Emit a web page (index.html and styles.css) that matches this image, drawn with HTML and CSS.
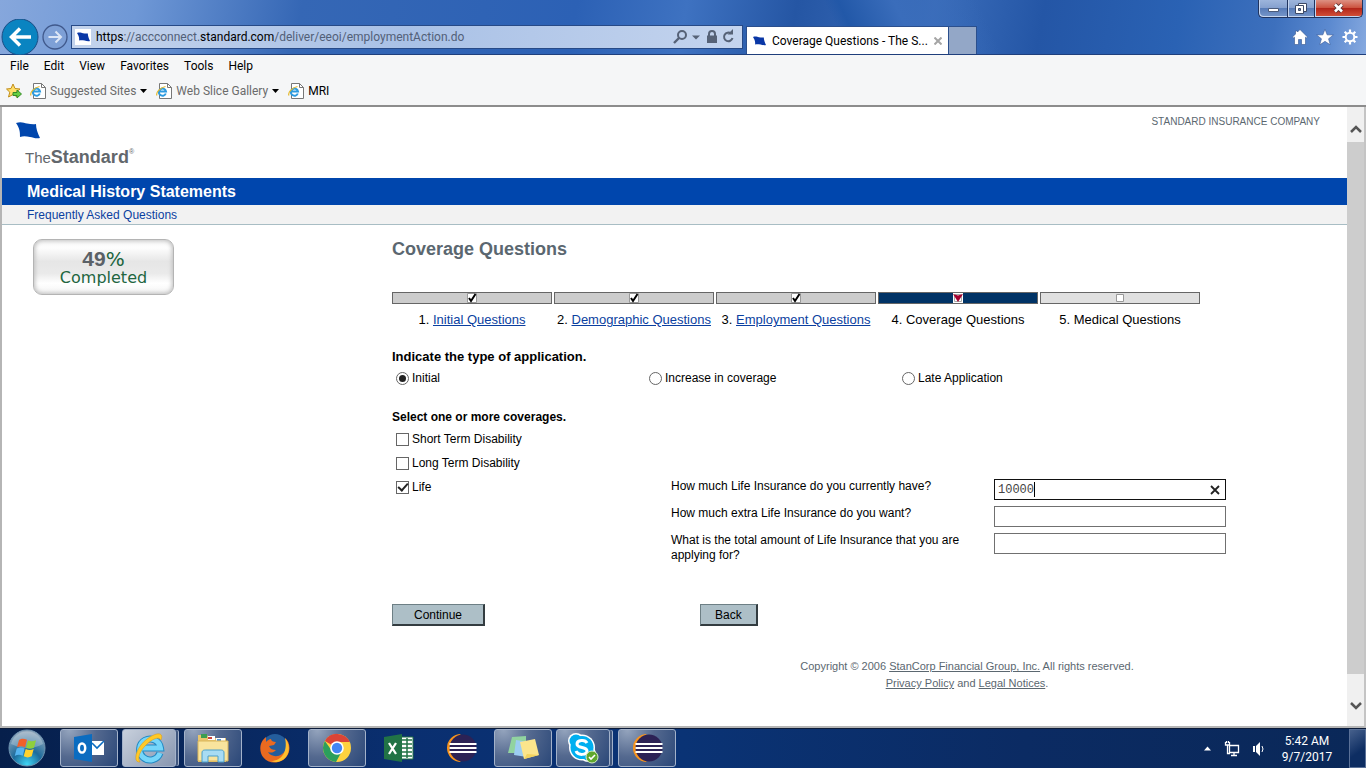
FILE: index.html
```html
<!DOCTYPE html>
<html lang="en">
<head>
<meta charset="utf-8">
<meta name="viewport" content="width=device-width, initial-scale=1">
<title>Coverage Questions - The Standard</title>
<link rel="stylesheet" href="styles.css">
</head>
<body>
<svg class="defs" aria-hidden="true">
  <symbol id="flag" viewBox="0 0 24 17"><path d="M0 1C5-1 8 1 11 1.500s6 1 9 .5c0 4 1.500 9 4 14-4 1-7-.5-10-1-4-.8-7-1-10 0 0-5 0-8-4-14z" fill="currentColor"/></symbol>
  <symbol id="iepage" viewBox="0 0 16 16">
    <path d="M3.500.5h8l4 4v11h-12z" fill="#fff" stroke="#777"/><path d="M11.500.5v4h4" fill="none" stroke="#777"/>
    <path d="M9.800 10.500a3.600 3.600 0 1 1 .2-2H3.500" fill="none" stroke="#2d9be0" stroke-width="2"/>
    <path d="M1 12.500C-.5 10 4 4.500 9.500 3.500" fill="none" stroke="#e5b92c" stroke-width="1.200"/>
  </symbol>
  <symbol id="eclipse" viewBox="0 0 32 30">
    <path d="M16 1A14 14 0 0 0 16 29 17 17 0 0 1 16 1z" fill="#f7941e"/>
    <circle cx="18" cy="15" r="13.500" fill="#2c2255"/>
    <path d="M4.500 11h27M4.500 15h27M4.500 19h27" stroke="#fff" stroke-width="2"/>
  </symbol>
  <symbol id="check" viewBox="0 0 10 10"><path d="M.5.5h9v9h-9z" fill="#fff" stroke="#999"/><path d="M2 5l2 3 4.500-7" fill="none" stroke="#000" stroke-width="2"/></symbol>
</svg>

<header class="chrome">
  <div class="window-controls">
    <button class="win-btn" aria-label="Minimize"><svg width="28" height="17"><path d="M9.500 8.500h10v3h-10z" fill="#fff" stroke="#4b5b7a"/></svg></button>
    <button class="win-btn" aria-label="Restore"><svg width="26" height="17"><path d="M10.500 3.500h8v8h-8z" fill="#fff" stroke="#3c4966"/><path d="M7.500 5.500h8v8h-8z" fill="#fff" stroke="#3c4966"/><path d="M10.500 8.500h2v2h-2z" fill="#6d87b5" stroke="#3c4966"/></svg></button>
    <button class="win-btn win-close" aria-label="Close"><svg width="47" height="17"><path d="M20 4.500l7 7m0-7l-7 7" stroke="#5d3434" stroke-width="4.500"/><path d="M20 4.500l7 7m0-7l-7 7" stroke="#fff" stroke-width="2.600"/></svg></button>
  </div>
  <div class="nav">
    <button class="back" aria-label="Go back"><svg width="38" height="36" viewBox="0 1 38 36"><circle cx="19" cy="19" r="18" fill="#0a84c1" stroke="#1a4d85"/><path d="M30 19H11M19 10.500L10.500 19l8.500 8.500" fill="none" stroke="#fff" stroke-width="3.500"/></svg></button>
    <button class="forward" aria-label="Go forward"><svg width="26" height="26"><circle cx="13" cy="13" r="12" fill="#7f9fd4" fill-opacity=".5" stroke="#40598c" stroke-width="1.300"/><path d="M6.500 13h12M13.500 7.500l5.500 5.500-5.500 5.500" fill="none" stroke="#dce6f6" stroke-width="2"/></svg></button>
    <div class="address">
      <span class="favicon"><svg width="13" height="10"><use href="#flag"/></svg></span>
      <span class="url"><b>https</b>://accconnect.<b>standard.com</b>/deliver/eeoi/employmentAction.do</span>
      <svg class="address-icons" width="64" height="16" fill="none" stroke="#566277">
        <circle cx="9" cy="6" r="4" stroke-width="2"/><path d="M6 9l-5 5" stroke-width="2.400"/>
        <path d="M19 6.500h8l-4 4z" fill="#566277" stroke="none"/>
        <path d="M34 6.500h10v7.500H34z" fill="#566277" stroke="none"/><path d="M36 7V5a3 3 0 0 1 6 0v2" stroke-width="2"/>
        <path d="M58 4.500A4.300 4.300 0 1 0 59.500 9" stroke-width="2"/><path d="M54.500 5.500H60V0z" fill="#566277" stroke="none"/>
      </svg>
    </div>
    <div class="tab"><svg width="13" height="10"><use href="#flag"/></svg><span>Coverage Questions - The S...</span><button class="tab-close" aria-label="Close tab"><svg width="8" height="8"><path d="M.5.5l7 7m0-7l-7 7" stroke="#a5a5a5" stroke-width="2"/></svg></button></div>
    <button class="new-tab" aria-label="New tab"></button>
    <div class="tools">
      <button aria-label="Home"><svg width="16" height="16"><path d="M8 .5L15.500 8l-1 1-1-.8V15.500H9.500v-5h-3v5H2.500V8.200l-1 .8-1-1L3.500 5V2h2v1z" fill="#fff" stroke="#34548d" stroke-width=".6"/></svg></button>
      <button aria-label="Favorites"><svg width="18" height="16" viewBox="0 0 16 15"><path d="M8 .2l2 5.300 5.800.1-4.500 3.600 1.600 5.600L8 11.600l-4.900 3.200 1.600-5.600L.2 5.600 6 5.500z" fill="#fff" stroke="#34548d" stroke-width=".5"/></svg></button>
      <button aria-label="Tools"><svg width="16" height="16" fill="none" stroke="#fff"><circle cx="8" cy="8" r="4.300" stroke-width="2"/><path d="M8 .5v3M8 12.500v3M.5 8h3M12.500 8h3M2.700 2.700l2 2M11.300 11.300l2 2M2.700 13.300l2-2M11.300 4.700l2-2" stroke-width="2.200"/></svg></button>
    </div>
  </div>
</header>

<div class="bars">
  <nav class="menu"><button>File</button><button>Edit</button><button>View</button><button>Favorites</button><button>Tools</button><button>Help</button></nav>
  <nav class="favorites">
    <button aria-label="Add to favorites"><svg width="17" height="16"><path d="M7 1l2 4.500 5 .5-3.800 3.200L11.500 14 7 11.500 2.500 14l1.300-4.800L.5 6l4.500-.5z" fill="#ffdf69" stroke="#c18e1c"/><path d="M7 9.500h4V7l4.500 4-4.500 4v-2.500H7z" fill="#67cf43" stroke="#348b27"/></svg></button>
    <button class="fav fav-wide"><svg width="16" height="16"><use href="#iepage"/></svg><span>Suggested Sites</span><svg width="7" height="4"><path d="M0 0h7L3.500 4z"/></svg></button>
    <button class="fav fav-wide"><svg width="16" height="16"><use href="#iepage"/></svg><span>Web Slice Gallery</span><svg width="7" height="4"><path d="M0 0h7L3.500 4z"/></svg></button>
    <button class="fav fav-dark"><svg width="16" height="16"><use href="#iepage"/></svg><span>MRI</span></button>
  </nav>
</div>

<div class="viewport">
  <div class="page">
    <div class="brand">
      <div class="logo"><svg class="logo-flag" width="24" height="17"><use href="#flag"/></svg><div class="logo-name">The<strong>Standard</strong><sup>®</sup></div></div>
      <div class="company">STANDARD INSURANCE COMPANY</div>
    </div>
    <div class="title-bar">Medical History Statements</div>
    <div class="sub-bar"><a href="#faq">Frequently Asked Questions</a></div>
    <div class="body">
      <aside class="side"><div class="progress"><div class="percent"><b>49</b>%</div><div>Completed</div></div></aside>
      <main class="content">
        <h1>Coverage Questions</h1>
        <ol class="steps">
          <li><div class="step-bar"><svg width="10" height="10"><use href="#check"/></svg></div>1. <a href="#s1">Initial Questions</a></li>
          <li><div class="step-bar"><svg width="10" height="10"><use href="#check"/></svg></div>2. <a href="#s2">Demographic Questions</a></li>
          <li><div class="step-bar"><svg width="10" height="10"><use href="#check"/></svg></div>3. <a href="#s3">Employment Questions</a></li>
          <li><div class="step-bar current"><svg width="10" height="10"><path d="M0 0h10v10H0z" fill="#fff"/><path d="M1.500 1.500h7v7h-7z" fill="none" stroke="#aaa"/><path d="M0 1l5 1.500L10 1 5 9z" fill="#a5002f"/></svg></div>4. Coverage Questions</li>
          <li><div class="step-bar next"><svg width="10" height="10"><path d="M1.500 1.500h7v7h-7z" fill="#fff" stroke="#999"/></svg></div>5. Medical Questions</li>
        </ol>
        <form>
          <h2 class="type-title">Indicate the type of application.</h2>
          <div class="types">
            <label class="choice"><input type="radio" name="type" checked>Initial</label>
            <label class="choice"><input type="radio" name="type">Increase in coverage</label>
            <label class="choice"><input type="radio" name="type">Late Application</label>
          </div>
          <h2 class="cover-title">Select one or more coverages.</h2>
          <label class="choice cover"><input type="checkbox">Short Term Disability</label>
          <label class="choice cover"><input type="checkbox">Long Term Disability</label>
          <div class="life">
            <label class="choice cover"><input type="checkbox" checked>Life</label>
            <div class="amounts">
              <label for="have">How much Life Insurance do you currently have?</label>
              <div class="field"><input id="have" class="active" type="text" value="10000"><span class="caret"></span><button type="button" class="clear" aria-label="Clear"><svg width="10" height="10"><path d="M1 1l8 8m0-8L1 9" stroke="#222" stroke-width="1.800"/></svg></button></div>
              <label for="extra">How much extra Life Insurance do you want?</label>
              <div class="field"><input id="extra" type="text"></div>
              <label for="total">What is the total amount of Life Insurance that you are applying for?</label>
              <div class="field"><input id="total" type="text"></div>
            </div>
          </div>
          <div class="actions"><button type="button" class="action">Continue</button><button type="button" class="action">Back</button></div>
        </form>
        <footer class="legal">Copyright © 2006 <a href="#corp">StanCorp Financial Group, Inc.</a> All rights reserved.<br><a href="#privacy">Privacy Policy</a> and <a href="#legal">Legal Notices</a>.</footer>
      </main>
    </div>
  </div>
  <div class="scrollbar">
    <button aria-label="Scroll up"><svg width="12" height="9"><path d="M1 7l5-5 5 5" fill="none" stroke="#555" stroke-width="2.500"/></svg></button>
    <div class="track"><div class="thumb"></div></div>
    <button aria-label="Scroll down"><svg width="12" height="9"><path d="M1 2l5 5 5-5" fill="none" stroke="#555" stroke-width="2.500"/></svg></button>
  </div>
</div>

<footer class="taskbar">
  <button class="start" aria-label="Start"><svg width="38" height="38" viewBox="0 0 38 38">
    <defs><radialGradient id="orb" cx=".5" cy=".95" r=".9"><stop offset="0" stop-color="#3fd5f5"/><stop offset=".45" stop-color="#1c6b9c"/><stop offset="1" stop-color="#8fa6bb"/></radialGradient></defs>
    <circle cx="19" cy="19" r="18" fill="url(#orb)" stroke="#6f93b0"/><path d="M3 15a16.500 16.500 0 0 1 32 0c-9 5-20 6-32 0z" fill="#fff" opacity=".25"/>
    <path d="M11 11c3-2 5-1.500 8-.2l-2 7.500c-3-1.500-5-1.500-8 0z" fill="#f0602a"/><path d="M20 11.500c3 1.200 5 1 8-.3l-2 7.500c-3 1.300-5 1.300-8 0z" fill="#8fcf3c"/>
    <path d="M8.700 19.500c3-1.500 5-1.300 8 0l-2 7.300c-3-1.300-5-1.300-8 .3z" fill="#55b4f0"/><path d="M17.700 20c3 1.300 5 1.300 8 0l-2 7.300c-3 1.500-5 1.500-8 0z" fill="#ffd22e"/></svg></button>
  <button class="task open" aria-label="Outlook"><svg width="32" height="30" viewBox="0 0 32 30"><path d="M1 4l18-3v28L1 26z" fill="#0b6cc0"/><ellipse cx="9" cy="15" rx="3.200" ry="4.600" fill="none" stroke="#fff" stroke-width="2.500"/><path d="M19 8h12v14H19z" fill="#fff"/><path d="M19 10l5 5 7-7" fill="none" stroke="#0b6cc0" stroke-width="1.600"/></svg></button>
  <button class="task open stack bright" aria-label="Internet Explorer"><svg width="32" height="32" viewBox="0 0 32 32"><path d="M27 21a10.500 10.500 0 1 1 .5-5H9" fill="none" stroke="#238ac4" stroke-width="7"/><path d="M27 21a10.500 10.500 0 1 1 .5-5H9" fill="none" stroke="#75d6fa" stroke-width="5"/><path d="M7 30C-1 31 3 15 14 7S31 1 28 8C26 4 19 7 13 13S4 26 7 30z" fill="#ffc928" stroke="#d69512" stroke-width=".5"/></svg></button>
  <button class="task open" aria-label="File Explorer"><svg width="34" height="32" viewBox="0 0 34 32"><path d="M2 3h9l2 3h17v24H2z" fill="#e9c66c"/><path d="M5 2h6v4H5z" fill="#3c9e50"/><path d="M12 4h7v4h-7z" fill="#fff"/><path d="M12 5h4v2h-4z" fill="#cc453c"/><path d="M20 6h9v4h-9z" fill="#fff"/><path d="M21 7h4v2h-4z" fill="#5795d0"/><path d="M2 9h30v20H2z" fill="#f9e49d" stroke="#d9b55b"/><path d="M6 30V21c0-3 2-3 4-3h14c2 0 4 0 4 3v9h-6v-6H12v6z" fill="#a8dcf3" stroke="#4a9fca"/></svg></button>
  <button class="task" aria-label="Firefox"><svg width="32" height="32" viewBox="0 0 32 32"><circle cx="16" cy="15" r="13" fill="#245d9c"/><path d="M7 5C0 10 0 20 4 25c6 8 19 7 24-1 4-6 3-14-2-18 3 7 2 13-3 16-5 4-12 2-14-2 3 1 5 1 8-2-3 0-6-1-7-4l5-1 2-3c-3 0-5-1-5-3-2 0-4 2-5 3z" fill="#ea6a20"/><path d="M26 6c5 6 5 14 1 19-4 5-10 6-15 4 11 0 17-10 14-23z" fill="#ffc02e"/></svg></button>
  <button class="task open" aria-label="Chrome"><svg width="30" height="30" viewBox="0 0 30 30"><circle cx="15" cy="15" r="14" fill="#ffd23f"/><path d="M15 15L2.900 8A14 14 0 0 1 27.800 9H15z" fill="#db4437"/><path d="M2.900 8A14 14 0 0 0 14 29l6-11-10 0z" fill="#2b9f5c"/><circle cx="15" cy="15" r="6.800" fill="#fff"/><circle cx="15" cy="15" r="5.200" fill="#4285f4"/></svg></button>
  <button class="task" aria-label="Excel"><svg width="32" height="30" viewBox="0 0 32 30"><path d="M17 4h13v22H17z" fill="#fff" stroke="#217346"/><path d="M19 7h10M19 11h10M19 15h10M19 19h10M19 23h10M24 5v20" stroke="#217346" stroke-width="1.500"/><path d="M1 4l18-3v28L1 26z" fill="#217346"/><path d="M6 10l7 11m0-11L6 21" stroke="#fff" stroke-width="2.300"/></svg></button>
  <button class="task" aria-label="Eclipse"><svg width="32" height="30"><use href="#eclipse"/></svg></button>
  <button class="task open" aria-label="Sticky Notes"><svg width="34" height="30" viewBox="0 0 34 30"><path d="M6 4l14-1v17H2z" fill="#91d3a0"/><path d="M10 7l13 2-2 15-13-2z" fill="#9ccdf1"/><path d="M14 9l15-3 4 16-15 4z" fill="#fbe58c"/><path d="M18 26l3-5 12 1z" fill="#f3d35d"/></svg></button>
  <button class="task open stack" aria-label="Skype"><svg width="34" height="32" viewBox="0 0 34 32"><circle cx="10" cy="9" r="8" fill="#fff"/><circle cx="22" cy="22" r="8" fill="#fff"/><circle cx="16" cy="15.500" r="13" fill="#fff"/><circle cx="10" cy="9" r="6.500" fill="#00aff0"/><circle cx="22" cy="22" r="6.500" fill="#00aff0"/><circle cx="16" cy="15.500" r="11.500" fill="#00aff0"/><path d="M21 11c-2-4-10-3-10 1 0 5 10 2 10 7 0 4-9 5-11 0" fill="none" stroke="#fff" stroke-width="3"/><circle cx="26" cy="25" r="6" fill="#5fa72c" stroke="#d5eec6"/><path d="M23 25l2 2 4-4" fill="none" stroke="#fff" stroke-width="1.600"/></svg></button>
  <button class="task open" aria-label="Eclipse workspace"><svg width="32" height="30"><use href="#eclipse"/></svg></button>
  <div class="tray">
    <svg width="8" height="5"><path d="M0 4.500h7L3.500.5z" fill="#fff"/></svg>
    <svg width="16" height="16" fill="none" stroke="#fff"><path d="M5.500 4.500h9v7h-9zM7 14.500h6M10 12v2M1.500 1v3h4V1M2.500 0v2M4.500 0v2M3.500 4v8.500H6" stroke-width="1.300"/></svg>
    <svg width="15" height="16"><path d="M1 5h2v6H1zM4 5l4-4v14l-4-4z" fill="#fff"/><path d="M10 5q2 3 0 6" fill="none" stroke="#fff"/></svg>
    <div class="clock">5:42 AM<br>9/7/2017</div>
  </div>
  <button class="show-desktop" aria-label="Show desktop"></button>
</footer>
</body>
</html>
```
FILE: styles.css
```css
* { box-sizing: border-box; }
body {
  margin: 0;
  min-height: 100vh;
  display: flex;
  flex-direction: column;
  font: 12px/16px "Liberation Sans", Arial, sans-serif;
  color: #000;
  background: #fff;
}
button { font: inherit; color: inherit; padding: 0; border: 0; background: none; }
svg { display: block; flex: none; }
.defs { position: absolute; width: 0; height: 0; }

/* Browser frame */
.chrome, .bars, .taskbar { font-family: Roboto, "Open Sans", sans-serif; }
.chrome {
  height: 55px;
  border-bottom: 1px solid #1f3f7c;
  background:
    linear-gradient(65deg, transparent 61%, #2258a8 62%, #3a6dbb 66%, transparent 72%),
    linear-gradient(100deg, #86a7dc 0, #6f98d6 10%, #3567b5 22%, #2c61b5 42%, #3e72c1 50%, #2556a4 58%, #3b6dba 68%, #2456a6 76%, #2a62b4 86%, #3d70bd 93%, #5c8ad0 97%, #86a9df 100%);
}
.window-controls { display: flex; justify-content: flex-end; height: 18px; padding-right: 3px; }
.win-btn {
  border: 1px solid #20345f;
  border-top: 0;
  border-right: 0;
  box-shadow: inset 1px -1px 0 #c5d5ef;
  background: linear-gradient(#9db5dc 0, #86a1cf 45%, #587cb8 50%, #7797ca 100%);
}
.win-btn:first-child { border-bottom-left-radius: 5px; }
.win-close { border-right: 1px solid #20345f; border-bottom-right-radius: 5px; background: linear-gradient(#dd9183 0, #cc5340 45%, #b3261a 50%, #d4533a 100%); }
.nav { display: flex; align-items: center; height: 36px; padding-top: 2px; }
.back { margin: 0 3px 0 1px; }
.forward { margin-right: 3px; }
.address {
  flex: 0 1 672px;
  height: 24px;
  display: flex;
  align-items: center;
  border: 1px solid #274a87;
  background: linear-gradient(90deg, #c3d3ec, #a9c1e6 50%, #c4d4ee);
  padding-right: 5px;
  min-width: 0;
}
.favicon { display: flex; align-items: center; justify-content: center; width: 16px; height: 16px; margin: 0 5px 0 3px; background: #fff; color: #0a37a6; }
.url { flex: 1; overflow: hidden; white-space: nowrap; color: #526078; }
.url b { font-weight: normal; color: #000; }
.tab { flex: 0 0 200px; align-self: flex-end; display: flex; align-items: center; gap: 6px; height: 28px; margin-left: 3px; padding: 0 6px; border: 1px solid #2b4f8d; border-bottom: 0; background: #fff; white-space: nowrap; }
.tab svg { color: #0a37a6; }
.tab span { flex: 1; min-width: 0; }
.new-tab { align-self: flex-end; width: 28px; height: 28px; border: 1px solid #2b4f8d; border-left: 0; border-bottom: 0; background: #93a7c7; }
.tools { display: flex; gap: 8px; margin-left: auto; padding-right: 8px; }

.bars { background: #f5f6f7; border-bottom: 2px solid #8c8c8c; height: 52px; }
.menu { display: flex; gap: 15px; height: 22px; padding-left: 10px; }
.favorites { display: flex; align-items: center; height: 27px; padding-left: 6px; }
.fav { display: flex; align-items: center; gap: 4px; margin-left: 7px; color: #6b6b6b; }
.fav-wide { margin-right: 2px; }
.fav svg { color: #000; fill: #000; }
.fav-dark { color: #000; }

/* Web page */
.viewport { flex: 1; display: flex; border: 2px solid #b5b5b5; border-top: 0; border-right-color: #c4c4c4; }
.page { flex: 1; min-width: 0; }
.brand { display: flex; justify-content: space-between; height: 71px; padding: 15px 27px 0 14px; }
.logo-flag { color: #0046ad; }
.logo-name { display: flex; align-items: baseline; margin: 8px 0 0 9px; font-size: 15px; line-height: 20px; color: #62676c; }
.logo-name strong { font-size: 18px; }
.logo-name sup { font-size: 7px; line-height: 7px; align-self: flex-start; margin-top: 1px; }
.company { margin-top: -9px; font-size: 10px; line-height: 17px; color: #5b6770; }
.title-bar { padding: 0 25px; font-size: 16px; line-height: 27px; font-weight: bold; color: #fff; background: #0046ad; }
.sub-bar { height: 20px; padding: 2px 25px; border-bottom: 1px solid #a8bdc4; background: #f2f2f2; }
.sub-bar a { color: #0b3fa0; text-decoration: none; }
.body { display: flex; }
.side { flex: 0 0 390px; padding: 14px 31px; }
.progress {
  width: 141px;
  height: 56px;
  padding-top: 9px;
  border: 1px solid #b4b4b4;
  border-radius: 9px;
  background: linear-gradient(#fafafa, #fdfdfd 15%, #e6e6e6 40%, #eaeaea 62%, #fff 80%, #f4f4f4);
  box-shadow: inset 0 0 4px 1px #bdbdbd;
  font: 16px/18px "DejaVu Sans", Verdana, sans-serif;
  text-align: center;
  color: #21653f;
}
.percent { font-size: 20px; line-height: 20px; }
.percent b { font-family: "Liberation Sans", Arial, sans-serif; font-size: 21px; line-height: 20px; color: #5b6167; }
.content { flex: 1; padding-top: 13px; }
h1 { margin: 0 0 32px; font-size: 18px; line-height: 22px; color: #5b6770; }
h2 { margin: 0; font-size: 12px; line-height: 16px; }
.steps { display: grid; grid-template-columns: repeat(5, 160px); gap: 2px; margin: 0; padding: 0; list-style: none; font-size: 13px; text-align: center; white-space: nowrap; }
.steps a { color: #0b3fa0; }
.step-bar { display: flex; justify-content: center; height: 12px; margin-bottom: 8px; border: 1px solid #666; background: #ccc; }
.step-bar.current { background: #036; }
.step-bar.next { background: #e0e0e0; }
.type-title { margin-top: 21px; font-size: 13px; }
.types { display: grid; grid-template-columns: repeat(3, 253px); margin-top: 5px; }
.choice { display: flex; align-items: center; gap: 3px; padding-left: 4px; }
.choice input { appearance: none; width: 13px; height: 13px; margin: 0; border: 1px solid #666; background: #fff; display: grid; place-items: center; }
.choice input[type="radio"] { border-radius: 50%; }
.choice input[type="radio"]:checked::before { content: ""; width: 7px; height: 7px; border-radius: 50%; background: #222; }
.choice input[type="checkbox"]:checked::before { content: ""; width: 8px; height: 4px; border: solid #222; border-width: 0 0 2px 2px; transform: rotate(-48deg); margin-bottom: 2px; }
.cover-title { margin: 23px 0 2px; }
.cover { height: 24px; }
.life { display: grid; grid-template-columns: 279px 1fr; align-items: start; }
.amounts { display: grid; grid-template-columns: 303px 232px; column-gap: 20px; row-gap: 6px; align-items: start; padding-top: 4px; line-height: 15px; }
.field { position: relative; }
.field input { display: block; width: 100%; height: 21px; padding: 0 3px; border: 1px solid #707070; font: 12px/15px "Liberation Mono", monospace; color: #444; background: #fff; }
.field input.active { border-color: #111; }
.caret { position: absolute; left: 40px; top: 3px; width: 1px; height: 15px; background: #000; }
.clear { position: absolute; right: 6px; top: 6px; }
.actions { display: flex; gap: 215px; margin-top: 41px; }
.action { height: 22px; padding: 0 21px; border: 1px solid #6d7f85; border-right: 2px solid #333c40; border-bottom: 2px solid #333c40; background: #adbfc7; }
.action:last-child { padding: 0 14px; }
.legal { margin: 32px 0 30px 195px; font-size: 11px; line-height: 17px; text-align: center; color: #5b6770; }
.legal a { color: inherit; }

.scrollbar { flex: 0 0 17px; display: flex; flex-direction: column; background: #f0f0f0; }
.scrollbar button { display: grid; place-items: center; height: 42px; }
.scrollbar button:first-child { height: 35px; padding-top: 9px; }
.track { flex: 1; padding-bottom: 10px; }
.thumb { height: 100%; background: #cdcdcd; }

/* Taskbar */
.taskbar { display: flex; gap: 4px; height: 40px; border-top: 1px solid #0a1a38; background: linear-gradient(90deg, #061f4b, #0a2f70 30%, #0a3375 50%, #0b2b63 75%, #0a2858); color: #fff; }
.start { width: 56px; height: 38px; padding-left: 8px; }
.task { width: 58px; height: 38px; display: grid; place-items: center; border: 1px solid transparent; border-radius: 3px; }
.open { border-color: #a3b2ca; background: radial-gradient(circle at 15% 0, #94a4bd, #54698f 45%, #2a4778 100%); }
.bright { background: linear-gradient(135deg, #c8d0dc, #8796b0); }
.stack { width: 54px; margin-right: 4px; box-shadow: 3px 0 0 -1px #40577f, 4px 0 0 -1px #a3b2ca; }
.tray { display: flex; align-items: center; gap: 12px; margin-left: auto; }
.clock { width: 56px; margin-right: 10px; text-align: center; }
.show-desktop { width: 17px; border: 1px solid #5a7198; background: linear-gradient(145deg, #46608c, #0d2d62 60%); }
```
